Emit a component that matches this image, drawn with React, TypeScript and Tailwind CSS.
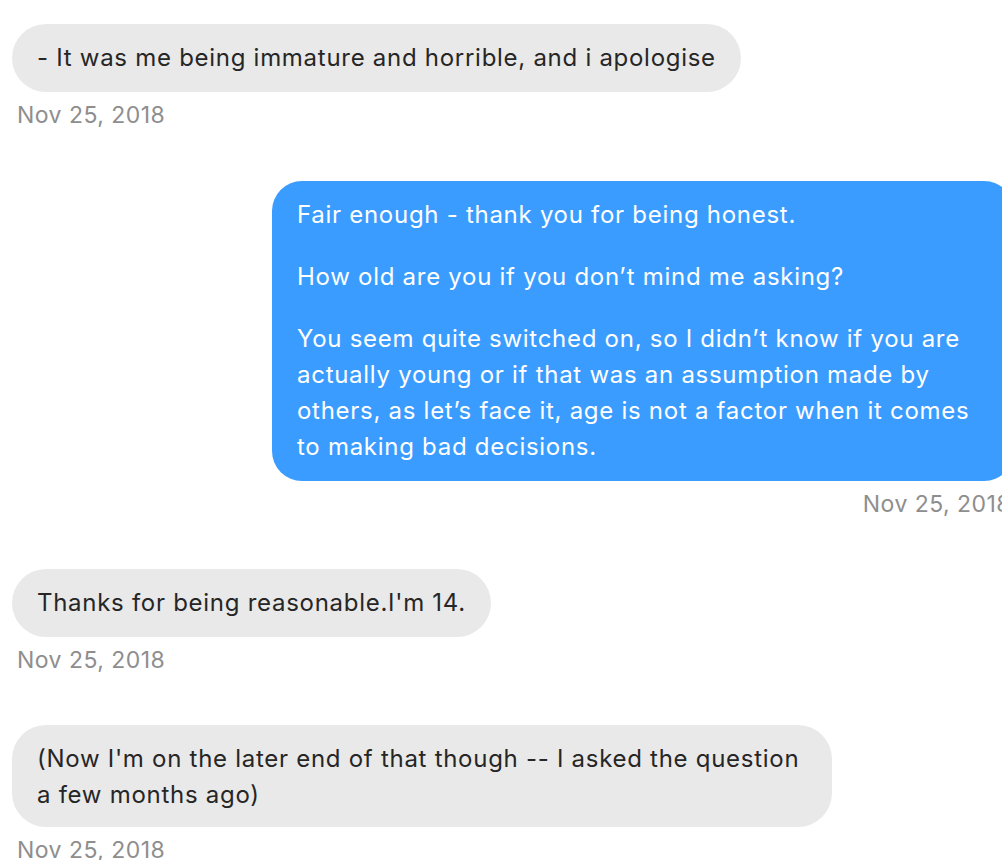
const font = { fontFamily: 'Inter, "Noto Sans", sans-serif' };

function Received({ children, className = '' }: { children: React.ReactNode; className?: string }) {
  return (
    <div className={`self-start rounded-[34px] bg-[#e9e9e9] px-[25px] py-[16px] text-[24px] leading-[36px] tracking-[0.03em] text-[#262626] ${className}`}>
      {children}
    </div>
  );
}

function Stamp({ right = false }: { right?: boolean }) {
  return (
    <div
      className={`mt-[8px] text-[23px] leading-[30px] tracking-[0.02em] text-[#8e8e8e] ${right ? 'self-end pr-[3px]' : 'self-start pl-[5px]'}`}
    >
      Nov 25, 2018
    </div>
  );
}

export default function App() {
  return (
    <div className="h-[860px] w-[1002px] overflow-hidden bg-white" style={font}>
      <div className="flex w-[1014px] flex-col pl-[12px] pt-[24px]">
        <Received>- It was me being immature and horrible, and i apologise</Received>
        <Stamp />

        <div className="mt-[51px] w-[742px] self-end rounded-[30px] bg-[#3a9cff] px-[25px] py-[16px] text-[24px] leading-[36px] tracking-[0.03em] text-white">
          <p>Fair enough - thank you for being honest.</p>
          <p className="mt-[26px]">How old are you if you don’t mind me asking?</p>
          <p className="mt-[26px]">
            You seem quite switched on, so I didn’t know if you are actually young or if that was an assumption
            made by others, as let’s face it, age is not a factor when it comes to making bad decisions.
          </p>
        </div>
        <Stamp right />

        <div className="mt-[50px] flex flex-col">
          <Received>Thanks for being reasonable.I'm 14.</Received>
          <Stamp />
        </div>

        <div className="mt-[50px] flex flex-col">
          <Received className="w-[820px] pb-[14px]">
            (Now I'm on the later end of that though -- I asked the question
            <br />a few months ago)
          </Received>
          <Stamp />
        </div>
      </div>
    </div>
  );
}
